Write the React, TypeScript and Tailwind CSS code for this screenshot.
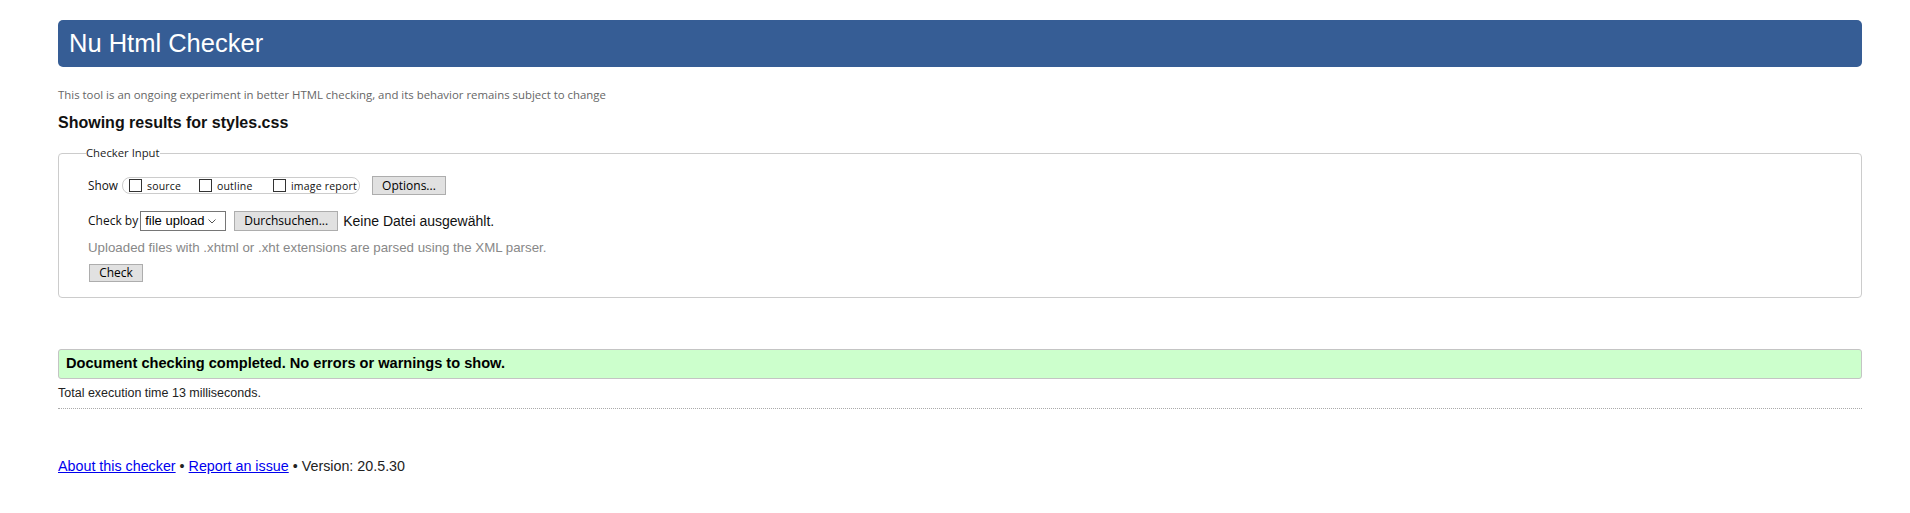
import React from 'react';

const ui = { fontFamily: '"Open Sans", "Noto Sans", sans-serif' };
const arial = { fontFamily: '"Liberation Sans", Arial, sans-serif' };

const Box = ({ label, className }: { label: string; className?: string }) => (
  <span className={`flex items-center ${className ?? ''}`}>
    <span className="w-[13px] h-[13px] border border-[#333] bg-white" />
    <span className="ml-[5px] text-[10.5px] leading-[14px] text-[#111] tracking-[0.2px]">{label}</span>
  </span>
);

const Button = ({ children, className }: { children: React.ReactNode; className?: string }) => (
  <span
    className={`flex items-center justify-center bg-[#e1e1e1] border border-[#adadad] text-[12px] text-black ${className ?? ''}`}
    style={ui}
  >
    {children}
  </span>
);

export default function App() {
  return (
    <div className="bg-white min-h-[513px] pl-[58px] pr-[48px] pt-[20px] text-[#222]" style={arial}>
      <h1 className="h-[47px] bg-[#365d95] rounded-[5px] flex items-center pl-[11px] text-white text-[25.5px] font-normal">
        Nu Html Checker
      </h1>

      <p className="mt-[21px] text-[11.4px] leading-[14px] text-[#666]" style={ui}>
        This tool is an ongoing experiment in better HTML checking, and its behavior remains subject to change
      </p>

      <h2 className="mt-[11px] text-[16px] leading-[19px] font-bold text-[#111]">Showing results for styles.css</h2>

      <fieldset className="mt-[13px] border border-[#cccccc] rounded-[4px] pl-[29px] pr-4 pb-[15px]">
        <legend className="-ml-[2px] px-0 text-[11.3px] leading-[16px] text-[#222]" style={ui}>
          Checker Input
        </legend>

        <div className="mt-[15px] flex items-center h-[19px]" style={ui}>
          <span className="text-[11.8px] text-[#111] mr-[4px]">Show</span>
          <span className="flex items-center h-[17px] w-[238px] border border-[#cccccc] rounded-[8px] pl-[6px]">
            <Box label="source" className="w-[70px]" />
            <Box label="outline" className="w-[74px]" />
            <Box label="image report" />
          </span>
          <Button className="ml-[12px] w-[74px] h-[19px]">Options...</Button>
        </div>

        <div className="mt-[16px] flex items-center h-[20px]" style={ui}>
          <span className="text-[12px] text-[#111] mr-[2px]">Check by</span>
          <span className="flex items-center justify-between w-[86px] h-[20px] border border-[#767676] bg-white pl-[4px] pr-[9px]">
            <span className="text-[13px] text-black" style={arial}>file upload</span>
            <svg width="8" height="5" viewBox="0 0 8 5" fill="none">
              <path d="M0.5 0.5 L4 4 L7.5 0.5" stroke="#555" strokeWidth="1" />
            </svg>
          </span>
          <Button className="ml-[8px] w-[104px] h-[20px]">Durchsuchen...</Button>
          <span className="ml-[5px] text-[14px] text-[#111]" style={arial}>
            Keine Datei ausgewählt.
          </span>
        </div>

        <p className="mt-[9px] text-[13.3px] leading-[16px] text-[#888]">
          Uploaded files with .xhtml or .xht extensions are parsed using the XML parser.
        </p>

        <div className="mt-[8px] flex">
          <Button className="ml-[1px] w-[54px] h-[18px]">Check</Button>
        </div>
      </fieldset>

      <div className="mt-[51px] h-[30px] bg-[#ccffcc] border border-[#c4c4c4] rounded-[3px] flex items-center pl-[7px]">
        <span className="text-[14.6px] font-bold text-black">Document checking completed. No errors or warnings to show.</span>
      </div>

      <p className="mt-[7px] text-[12.5px] leading-[15px] text-[#222]">Total execution time 13 milliseconds.</p>

      <div className="mt-[7px] border-t border-dotted border-[#aaaaaa]" />

      <p className="mt-[49px] text-[14.3px] leading-[17px] text-[#222]">
        <a href="#" className="text-[#0000ee] underline">About this checker</a> •{' '}
        <a href="#" className="text-[#0000ee] underline">Report an issue</a> • Version: 20.5.30
      </p>
    </div>
  );
}
